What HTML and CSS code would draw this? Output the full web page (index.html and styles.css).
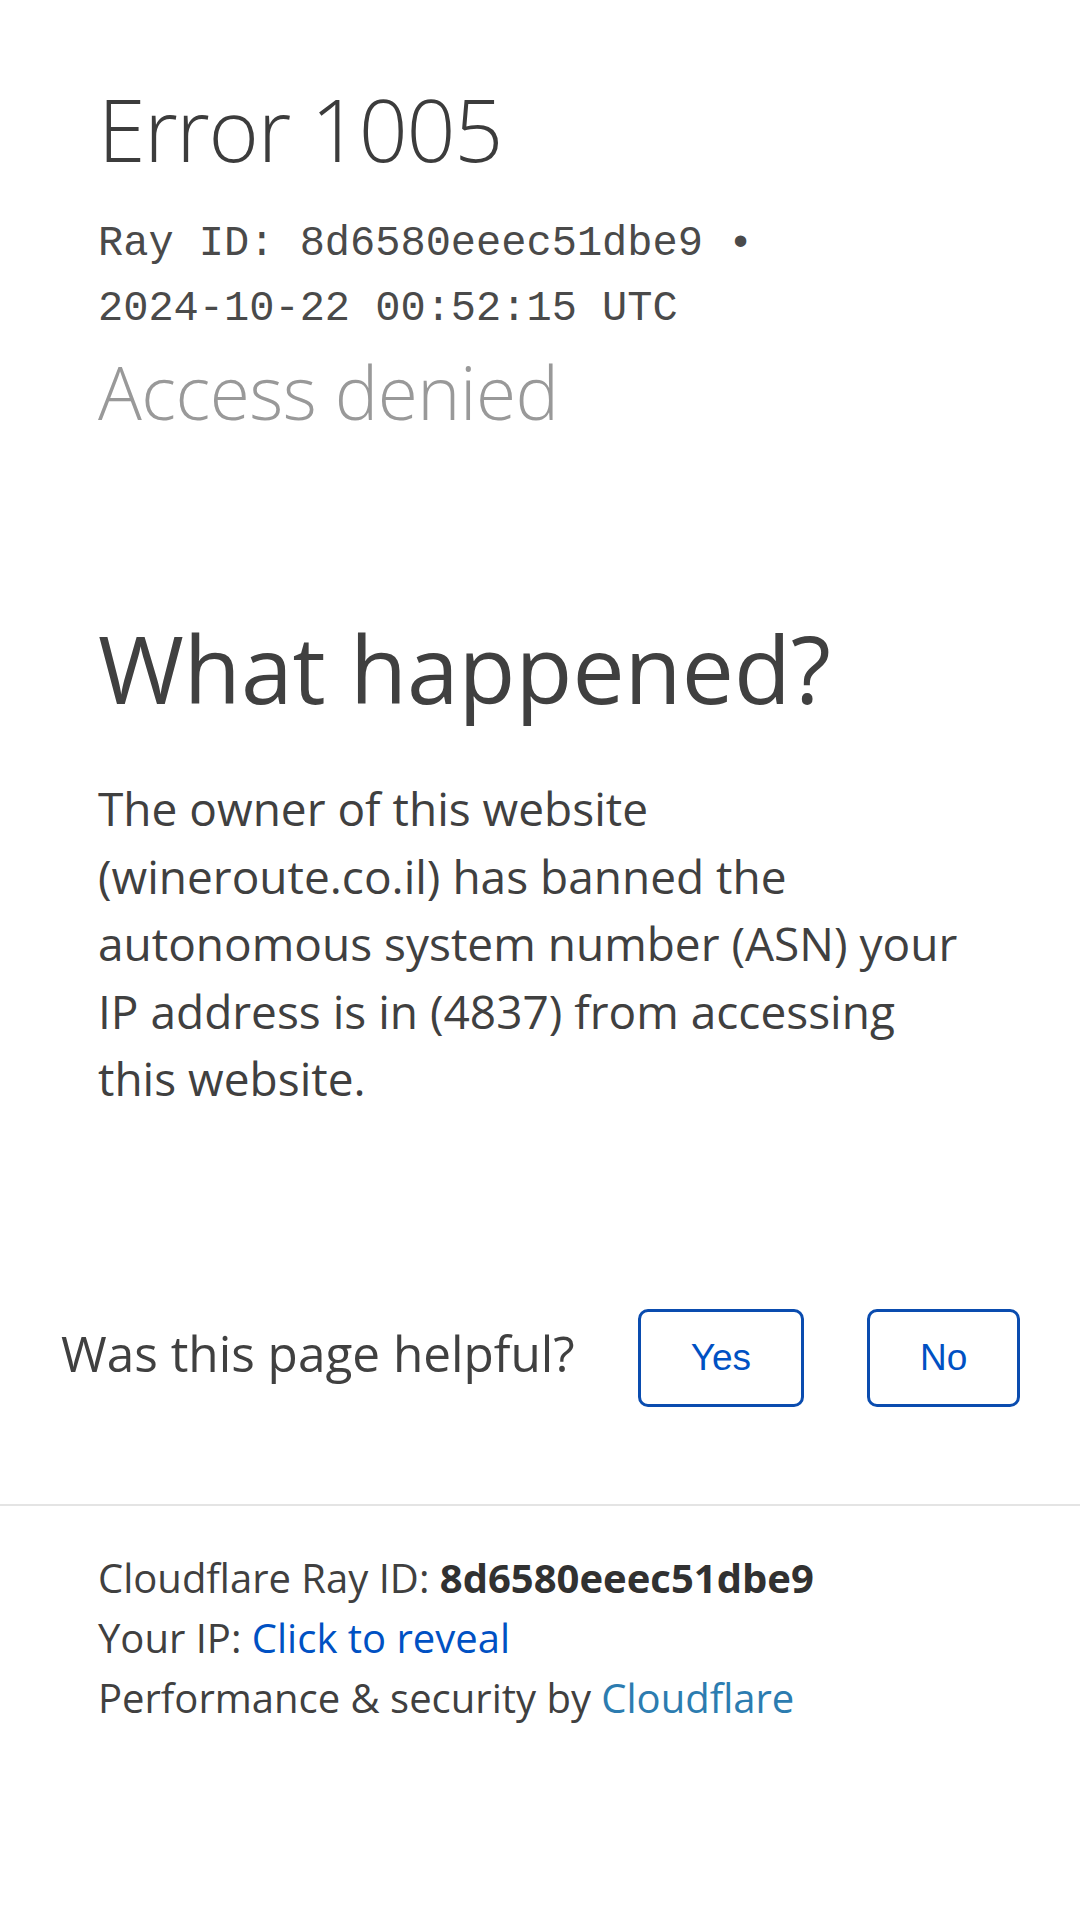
FILE: index.html
```html
<!DOCTYPE html>
<html lang="en">
<head>
<meta charset="utf-8">
<title>Access denied | wineroute.co.il used Cloudflare to restrict access</title>
<link rel="stylesheet" href="styles.css">
</head>
<body>
<div class="page">
  <header class="header">
    <h1 class="error-title">Error 1005</h1>
    <p class="ray-line"><span class="ray-item">Ray ID: 8d6580eeec51dbe9</span> • <span class="ray-item">2024-10-22 00:52:15 UTC</span></p>
    <h2 class="subtitle">Access denied</h2>
  </header>

  <section class="what">
    <h2 class="what-title">What happened?</h2>
    <p class="what-text">The owner of this website (wineroute.co.il) has banned the autonomous system number (ASN) your IP address is in (4837) from accessing this website.</p>
  </section>

  <div class="feedback">
    <span class="feedback-question">Was this page helpful?</span>
    <button class="feedback-btn" type="button">Yes</button>
    <button class="feedback-btn" type="button">No</button>
  </div>

  <div class="divider"></div>

  <footer class="footer">
    <p class="footer-line">Cloudflare Ray ID: <strong class="ray-id">8d6580eeec51dbe9</strong></p>
    <p class="footer-line">Your IP: <a class="reveal-link" href="#">Click to reveal</a></p>
    <p class="footer-line">Performance &amp; security by <a class="cf-link" href="#">Cloudflare</a></p>
  </footer>
</div>
</body>
</html>
```

FILE: styles.css
```css
* {
  box-sizing: border-box;
}

html, body {
  margin: 0;
  padding: 0;
  background: #ffffff;
}

body {
  font-family: "Open Sans", "Noto Sans", sans-serif;
  color: #404040;
}

.page {
  width: 1080px;
  min-height: 1920px;
}

.header {
  padding: 77px 98px 0;
}

.error-title {
  margin: 0;
  font-size: 86px;
  line-height: 103px;
  font-weight: 300;
  letter-spacing: -1.3px;
  color: #3c3c3c;
}

.ray-line {
  margin: 32px 0 0;
  font-family: "Liberation Mono", "Courier New", monospace;
  font-size: 42px;
  line-height: 65px;
  color: #4a4a4a;
}

.ray-item {
  white-space: nowrap;
}

.subtitle {
  margin: 8px 0 0;
  font-size: 73px;
  line-height: 84px;
  font-weight: 300;
  letter-spacing: -0.5px;
  color: #999999;
}

.what {
  padding: 0 98px;
}

.what-title {
  margin: 178px 0 0;
  font-size: 93px;
  line-height: 112px;
  font-weight: 400;
  color: #404040;
}

.what-text {
  margin: 51px 0 0;
  max-width: 876px;
  font-size: 46px;
  line-height: 67.5px;
  color: #404040;
}

.feedback {
  margin-top: 196px;
  padding-left: 61px;
  height: 98px;
  display: flex;
  align-items: center;
  gap: 63px;
}

.feedback-question {
  font-size: 49.5px;
  line-height: 66px;
  margin-bottom: 10px;
  color: #404040;
}

.feedback-btn {
  height: 98px;
  padding: 0 50px;
  border: 3px solid #0a4caf;
  border-radius: 10px;
  background: #ffffff;
  color: #0051c3;
  font-family: "Liberation Sans", Arial, sans-serif;
  font-size: 37px;
  cursor: pointer;
}

.divider {
  margin-top: 97px;
  height: 2px;
  background: #e4e4e4;
}

.footer {
  padding: 42px 98px 0;
}

.footer-line {
  margin: 0;
  font-size: 40px;
  line-height: 60px;
  color: #404040;
}

.ray-id {
  font-weight: 700;
  color: #313131;
}

.reveal-link {
  color: #0051c3;
  text-decoration: none;
}

.cf-link {
  color: #2c7cb0;
  text-decoration: none;
}
```
